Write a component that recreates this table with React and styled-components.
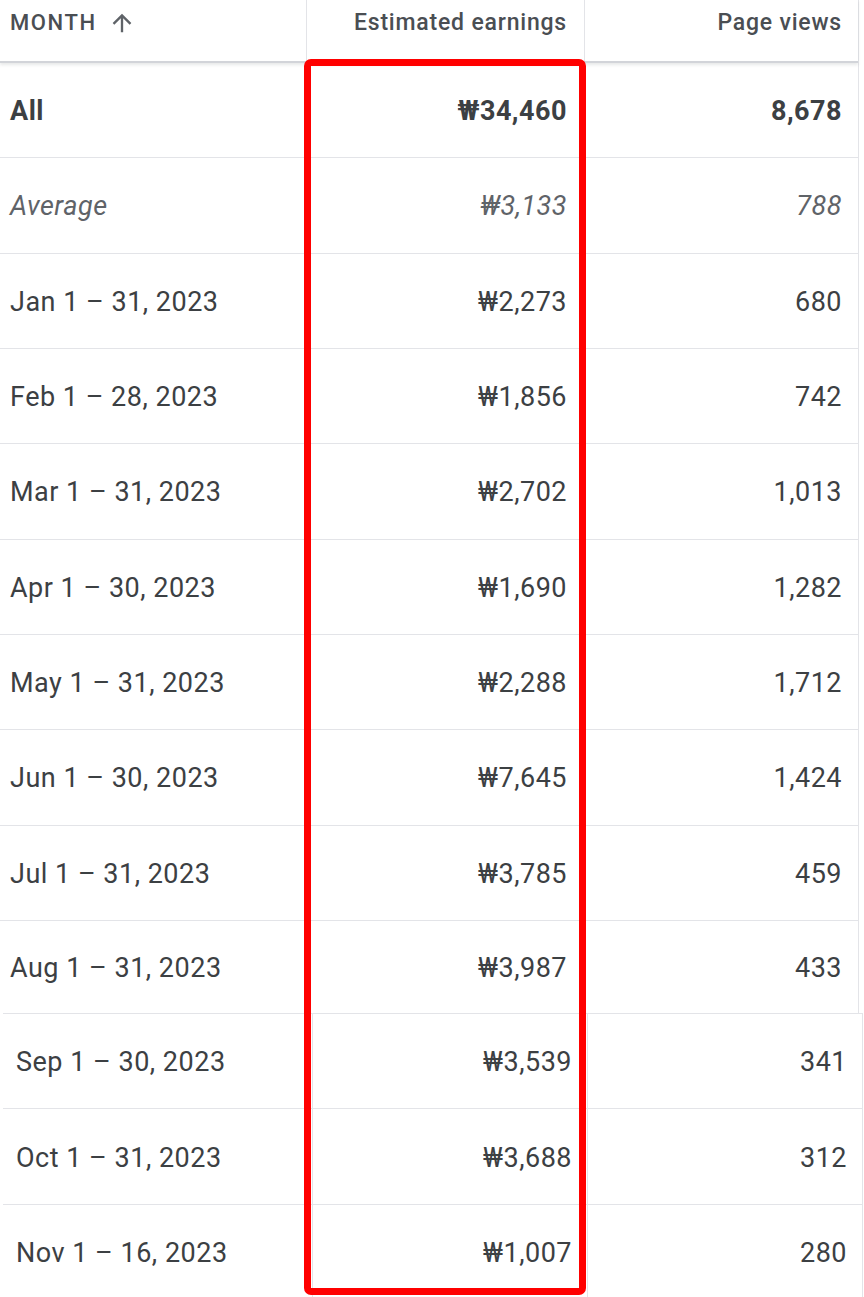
import styled, { createGlobalStyle } from "styled-components";

const GlobalStyle = createGlobalStyle`
  body {
    margin: 0;
    background: #fff;
    font-family: Roboto, "Liberation Sans", Arial, sans-serif;
    color: #3c4043;
  }
`;

const topRows = [
  { month: "All", earnings: "₩34,460", views: "8,678", kind: "total" },
  { month: "Average", earnings: "₩3,133", views: "788", kind: "avg" },
  { month: "Jan 1 – 31, 2023", earnings: "₩2,273", views: "680" },
  { month: "Feb 1 – 28, 2023", earnings: "₩1,856", views: "742" },
  { month: "Mar 1 – 31, 2023", earnings: "₩2,702", views: "1,013" },
  { month: "Apr 1 – 30, 2023", earnings: "₩1,690", views: "1,282" },
  { month: "May 1 – 31, 2023", earnings: "₩2,288", views: "1,712" },
  { month: "Jun 1 – 30, 2023", earnings: "₩7,645", views: "1,424" },
  { month: "Jul 1 – 31, 2023", earnings: "₩3,785", views: "459" },
  { month: "Aug 1 – 31, 2023", earnings: "₩3,987", views: "433" },
];

const bottomRows = [
  { month: "Sep 1 – 30, 2023", earnings: "₩3,539", views: "341" },
  { month: "Oct 1 – 31, 2023", earnings: "₩3,688", views: "312" },
  { month: "Nov 1 – 16, 2023", earnings: "₩1,007", views: "280" },
];

function ArrowUp() {
  return (
    <svg width="28" height="28" viewBox="0 0 24 24" fill="#5f6368">
      <path d="M4 12l1.41 1.41L11 7.83V20h2V7.83l5.58 5.59L20 12l-8-8-8 8z" />
    </svg>
  );
}

export default function App() {
  return (
    <Page>
      <GlobalStyle />
      <TopTable>
        <HeaderRow>
          <HeadCell>
            <MonthLabel>MONTH</MonthLabel>
            <ArrowUp />
          </HeadCell>
          <HeadCell align="right">Estimated earnings</HeadCell>
          <HeadCell align="right">Page views</HeadCell>
        </HeaderRow>
        {topRows.map((r, i) => (
          <Row key={r.month} last={i === topRows.length - 1}>
            <Cell kind={r.kind}>{r.month}</Cell>
            <Cell kind={r.kind} align="right" pad="17px">
              {r.earnings}
            </Cell>
            <Cell kind={r.kind} align="right" pad="15px">
              {r.views}
            </Cell>
          </Row>
        ))}
      </TopTable>
      <BottomTable>
        {bottomRows.map((r) => (
          <LowRow key={r.month}>
            <Cell lead="13px">{r.month}</Cell>
            <Cell align="right" pad="15px">
              {r.earnings}
            </Cell>
            <Cell align="right" pad="15px">
              {r.views}
            </Cell>
          </LowRow>
        ))}
      </BottomTable>
      <Highlight />
    </Page>
  );
}

const Page = styled.div`
  position: relative;
  width: 864px;
  height: 1297px;
  overflow: hidden;
  background: #fff;
`;

const TopTable = styled.div`
  width: 858px;
  border-right: 1px solid #e3e4e8;
`;

const HeaderRow = styled.div`
  display: grid;
  grid-template-columns: 307px 278px 272px;
  height: 63px;
  box-sizing: border-box;
  border-bottom: 2px solid #d2d4d9;
  box-shadow: 0 2px 3px rgba(60, 64, 67, 0.12);
`;

const HeadCell = styled.div`
  display: flex;
  align-items: flex-start;
  justify-content: ${({ align }) => (align === "right" ? "flex-end" : "flex-start")};
  gap: 11px;
  padding: 9px ${({ align }) => (align === "right" ? "17px" : "0")} 0 10px;
  border-right: 1px solid #e3e4e8;
  font-size: 23px;
  font-weight: 500;
  letter-spacing: 0.8px;
  line-height: 28px;
  white-space: nowrap;
  color: #4a4e53;

  &:last-child {
    border-right: none;
    padding-right: 15px;
  }
`;

const MonthLabel = styled.span`
  font-size: 22px;
  letter-spacing: 1.6px;
`;

const Row = styled.div`
  display: grid;
  grid-template-columns: 307px 278px 272px;
  height: ${({ last }) => (last ? "92px" : "95.33px")};
  box-sizing: border-box;
  border-bottom: ${({ last }) => (last ? "none" : "1.5px solid #e3e4e8")};
`;

const BottomTable = styled.div`
  margin-left: 3px;
  width: 860px;
`;

const LowRow = styled.div`
  display: grid;
  grid-template-columns: 310px 275px 274px;
  height: 95.5px;
  box-sizing: border-box;
  border-top: 1.5px solid #e3e4e8;
  border-right: 1px solid #e3e4e8;
`;

const Cell = styled.div`
  display: flex;
  align-items: center;
  justify-content: ${({ align }) => (align === "right" ? "flex-end" : "flex-start")};
  padding-top: 2px;
  padding-left: ${({ lead }) => lead || "10px"};
  padding-right: ${({ pad }) => pad || "0"};
  border-right: 1px solid #e3e4e8;
  font-size: 27px;
  letter-spacing: 0.5px;
  white-space: nowrap;
  color: ${({ kind }) => (kind === "avg" ? "#5f6368" : "#3c4043")};
  font-weight: ${({ kind }) => (kind === "total" ? 700 : 400)};
  font-style: ${({ kind }) => (kind === "avg" ? "italic" : "normal")};

  &:last-child {
    border-right: none;
  }
`;

const Highlight = styled.div`
  position: absolute;
  left: 304px;
  top: 59px;
  width: 282px;
  height: 1236px;
  box-sizing: border-box;
  border: 7px solid #ff0000;
  border-radius: 7px;
`;
